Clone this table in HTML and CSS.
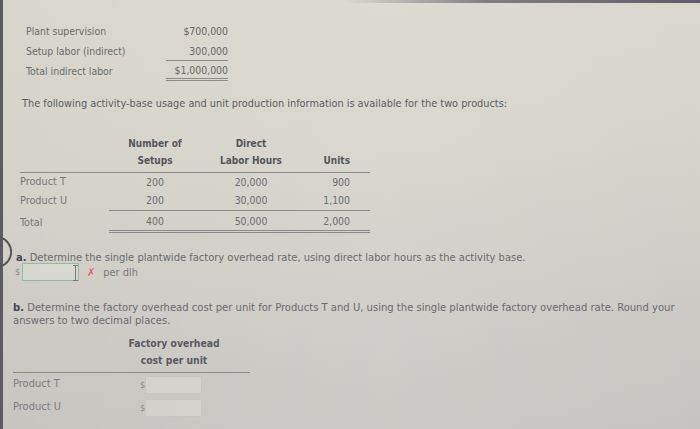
FILE: index.html
```html
<!DOCTYPE html>
<html>
<head>
<meta charset="utf-8">
<link rel="stylesheet" href="styles.css">
</head>
<body>
<div class="screen">
  <div class="topband"></div>
  <div class="page">
    <div class="labor">
      <div class="lbl">Plant supervision</div><div class="num">$700,000</div>
      <div class="lbl">Setup labor (indirect)</div><div class="num single">300,000</div>
      <div class="lbl">Total indirect labor</div><div class="num double">$1,000,000</div>
    </div>

    <p class="intro">The following activity-base usage and unit production information is available for the two products:</p>

    <div class="usage">
      <div class="h"></div>
      <div class="h c">Number of<br>Setups</div>
      <div class="h c">Direct<br>Labor Hours</div>
      <div class="h r">Units</div>

      <div class="lbl">Product T</div><div class="v c">200</div><div class="v c">20,000</div><div class="v r">900</div>
      <div class="lbl">Product U</div><div class="v c single">200</div><div class="v c single">30,000</div><div class="v r single">1,100</div>
      <div class="lbl">Total</div><div class="v c double">400</div><div class="v c double">50,000</div><div class="v r double">2,000</div>
    </div>

    <div class="qa">
      <svg class="marker" width="12" height="32" viewBox="0 0 12 32"><path d="M0 1.5 A 15 15 0 0 1 0 30.5" fill="none" stroke="#55545c" stroke-width="2"/></svg>
      <p class="q qa-text"><span class="letter">a.</span> Determine the single plantwide factory overhead rate, using direct labor hours as the activity base.</p>
      <div class="answer">
        <span class="dollar">$</span>
        <span class="box green"><span class="ibeam"></span></span>
        <span class="wrong">&#10007;</span>
        <span class="unit">per dlh</span>
      </div>
    </div>

    <p class="q qb"><span class="letter">b.</span> Determine the factory overhead cost per unit for Products T and U, using the single plantwide factory overhead rate. Round your answers to two decimal places.</p>

    <div class="cost">
      <div class="h"></div>
      <div class="h c">Factory overhead<br>cost per unit</div>
      <div class="h"></div>
      <div class="lbl">Product T</div>
      <div class="in"><span class="dollar">$</span><span class="box"></span></div>
      <div></div>
      <div class="lbl">Product U</div>
      <div class="in"><span class="dollar">$</span><span class="box"></span></div>
      <div></div>
    </div>
  </div>
</div>
</body>
</html>
```

FILE: styles.css
```css
html, body {
  margin: 0;
  padding: 0;
}
body {
  width: 700px;
  height: 429px;
  overflow: hidden;
  font-family: "DejaVu Sans Condensed", "DejaVu Sans", Verdana, sans-serif;
  font-size: 10px;
  color: #6a6a70;
}
.screen {
  position: relative;
  width: 700px;
  height: 429px;
  box-sizing: border-box;
  border-left: 3px solid #5c5a63;
  background:
    linear-gradient(90deg, rgba(255,255,255,0) 0%, rgba(255,255,255,0.10) 55%, rgba(255,255,255,0.04) 100%),
    linear-gradient(175deg, #d9d7cd 0%, #d4d2c9 40%, #cac8c3 75%, #c4c2be 100%);
}
.topband {
  position: absolute;
  top: 0;
  left: 340px;
  right: 0;
  height: 3px;
  background: linear-gradient(90deg, rgba(90,88,100,0) 0%, rgba(90,88,100,0.7) 40%, #5e5c68 100%);
}
.page {
  padding-top: 21px;
}

/* indirect labor block */
.labor {
  display: grid;
  grid-template-columns: 140px 62px;
  grid-auto-rows: 20px;
  margin-left: 23px;
  font-size: 10.4px;
}
.labor > div {
  display: flex;
  align-items: center;
}
.labor .num {
  justify-content: flex-end;
  color: #66666c;
}
.single {
  border-bottom: 1px solid #8c8b8c;
}
.double {
  border-bottom: 3px double #8c8b8c;
}

.intro {
  margin: 16px 0 0 19px;
  line-height: 14px;
  font-size: 10.85px;
  color: #5d5d63;
}

/* usage table */
.usage {
  display: grid;
  grid-template-columns: 89px 92px 100px 69px;
  grid-template-rows: auto 17px 21px 22px;
  margin: 24px 0 0 17px;
  width: 350px;
}
.usage .h {
  font-weight: bold;
  color: #55555c;
  line-height: 17px;
  padding-bottom: 3px;
  border-bottom: 1px solid #8c8b8c;
  display: flex;
  flex-direction: column;
  justify-content: flex-end;
}
.usage .lbl, .usage .v {
  display: flex;
  align-items: center;
}
.usage .lbl {
  color: #77777c;
  font-size: 10.8px;
}
.usage .v {
  color: #6c6c72;
  font-size: 10.4px;
}
.c { justify-content: center; text-align: center; }
.r { justify-content: flex-end; text-align: right; padding-right: 20px; }
.usage .h.r { align-items: flex-end; }

/* questions */
.qa {
  position: relative;
  margin-top: 18px;
}
.marker {
  position: absolute;
  left: -3px;
  top: -15px;
}
.q {
  margin: 0 0 0 13px;
  font-size: 11.05px;
  line-height: 13px;
  color: #6a6a70;
}
.letter {
  color: #46465a;
  font-weight: bold;
}
.answer {
  display: flex;
  align-items: center;
  margin: -2px 0 0 12px;
  height: 20px;
}
.dollar {
  color: #8a8a90;
  font-size: 9px;
  width: 7px;
}
.box {
  position: relative;
  display: inline-block;
  width: 57px;
  height: 18px;
  box-sizing: border-box;
  border: 1px solid #c6c5c1;
  background: rgba(230,229,222,0.35);
}
.box.green {
  border: 1.5px solid #98b9a3;
  background: rgba(225,230,222,0.4);
}
.ibeam {
  position: absolute;
  right: 2px;
  top: 1px;
  width: 1px;
  height: 16px;
  background: #7a7a78;
}
.ibeam::before, .ibeam::after {
  content: "";
  position: absolute;
  left: -2px;
  width: 5px;
  height: 1px;
  background: #7a7a78;
}
.ibeam::before { top: 0; }
.ibeam::after { bottom: 0; }
.wrong {
  color: #e0606a;
  font-size: 11px;
  font-weight: bold;
  margin-left: 8px;
}
.unit {
  margin-left: 8px;
  color: #7a7a80;
  font-size: 10.9px;
}
.qb {
  margin-top: 20px;
  margin-left: 10px;
  width: 672px;
  font-size: 11.15px;
  line-height: 12.5px;
}

/* cost table */
.cost {
  display: grid;
  grid-template-columns: 110px 102px 25px;
  grid-template-rows: auto 23px 24px;
  margin: 8px 0 0 10px;
  width: 237px;
}
.cost .h {
  font-weight: bold;
  color: #5a5a62;
  font-size: 10.3px;
  line-height: 17px;
  padding-bottom: 3px;
  border-bottom: 1px solid #8c8b8c;
  display: flex;
  flex-direction: column;
  justify-content: flex-end;
  white-space: nowrap;
}
.cost .lbl {
  display: flex;
  align-items: center;
  padding-bottom: 3px;
  color: #7c7c82;
  font-size: 11px;
}
.cost .in {
  display: flex;
  align-items: center;
  margin-left: 17px;
}
.cost .in .dollar {
  width: 5px;
}
```
